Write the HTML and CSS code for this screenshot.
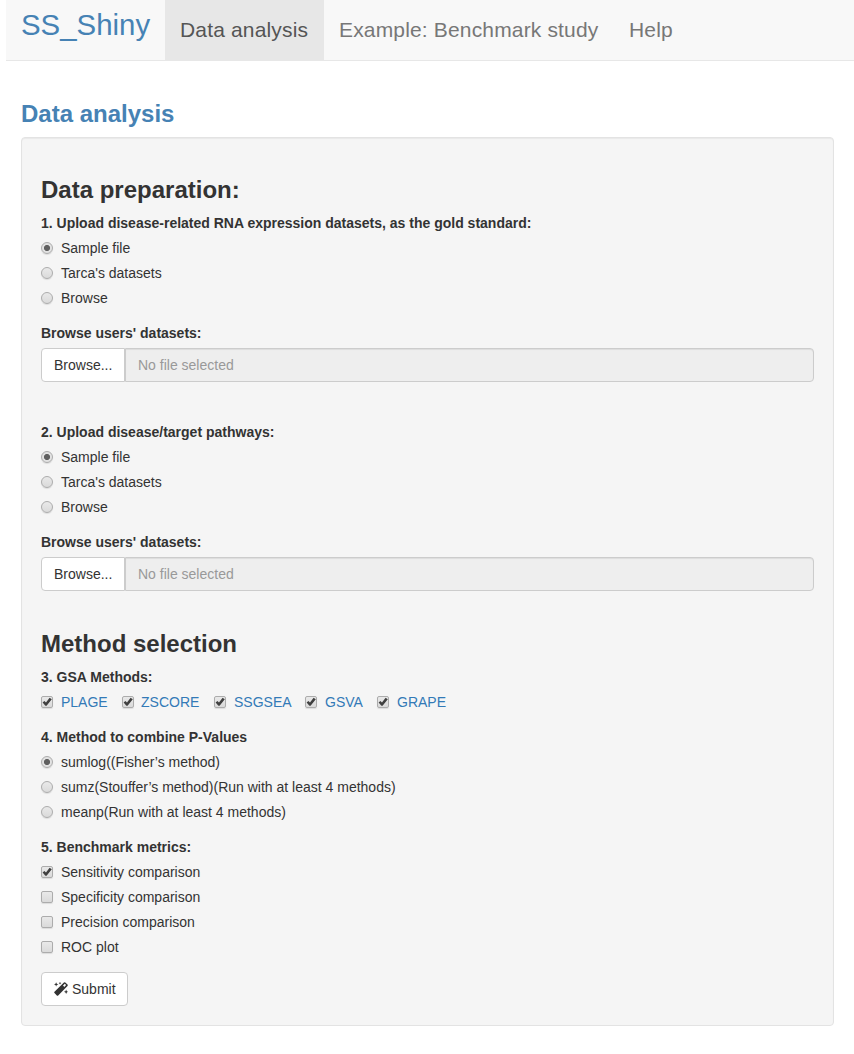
FILE: index.html
```html
<!DOCTYPE html>
<html lang="en">
<head>
<meta charset="utf-8">
<title>SS_Shiny</title>
<link rel="stylesheet" href="styles.css">
</head>
<body>
<nav class="navbar">
  <a class="brand">SS_Shiny</a>
  <a class="tab tab-active">Data analysis</a>
  <a class="tab tab-wide">Example: Benchmark study</a>
  <a class="tab">Help</a>
</nav>
<main class="page">
  <h1 class="title">Data analysis</h1>
  <form class="well">
    <h2 class="section">Data preparation:</h2>
    <div class="group">
      <div class="label">1. Upload disease-related RNA expression datasets, as the gold standard:</div>
      <label class="option"><input class="radio" type="radio" name="data" checked><span>Sample file</span></label>
      <label class="option"><input class="radio" type="radio" name="data"><span>Tarca's datasets</span></label>
      <label class="option"><input class="radio" type="radio" name="data"><span>Browse</span></label>
    </div>
    <div class="group group-file">
      <div class="label">Browse users' datasets:</div>
      <div class="file"><span class="file-button">Browse...</span><span class="file-name">No file selected</span></div>
    </div>
    <div class="group">
      <div class="label">2. Upload disease/target pathways:</div>
      <label class="option"><input class="radio" type="radio" name="path" checked><span>Sample file</span></label>
      <label class="option"><input class="radio" type="radio" name="path"><span>Tarca's datasets</span></label>
      <label class="option"><input class="radio" type="radio" name="path"><span>Browse</span></label>
    </div>
    <div class="group group-file">
      <div class="label">Browse users' datasets:</div>
      <div class="file"><span class="file-button">Browse...</span><span class="file-name">No file selected</span></div>
    </div>
    <h2 class="section section-method">Method selection</h2>
    <div class="group">
      <div class="label">3. GSA Methods:</div>
      <div class="inline">
        <label class="option link w-plage"><input class="check" type="checkbox" checked><span>PLAGE</span></label>
        <label class="option link w-zscore"><input class="check" type="checkbox" checked><span>ZSCORE</span></label>
        <label class="option link w-ssgsea"><input class="check" type="checkbox" checked><span>SSGSEA</span></label>
        <label class="option link w-gsva"><input class="check" type="checkbox" checked><span>GSVA</span></label>
        <label class="option link"><input class="check" type="checkbox" checked><span>GRAPE</span></label>
      </div>
    </div>
    <div class="group">
      <div class="label">4. Method to combine P-Values</div>
      <label class="option"><input class="radio" type="radio" name="combine" checked><span>sumlog((Fisher’s method)</span></label>
      <label class="option"><input class="radio" type="radio" name="combine"><span>sumz(Stouffer’s method)(Run with at least 4 methods)</span></label>
      <label class="option"><input class="radio" type="radio" name="combine"><span>meanp(Run with at least 4 methods)</span></label>
    </div>
    <div class="group">
      <div class="label">5. Benchmark metrics:</div>
      <label class="option"><input class="check" type="checkbox" checked><span>Sensitivity comparison</span></label>
      <label class="option"><input class="check" type="checkbox"><span>Specificity comparison</span></label>
      <label class="option"><input class="check" type="checkbox"><span>Precision comparison</span></label>
      <label class="option"><input class="check" type="checkbox"><span>ROC plot</span></label>
    </div>
    <button class="submit" type="button">
      <svg class="wand" viewBox="0 0 14 14" width="14" height="14" fill="#333">
        <path fill-rule="evenodd" d="M9.9 .5Q10.6 -.1 11.3 .5L13.5 2.6Q14.1 3.3 13.5 4L4.2 13.4Q3.5 14 2.8 13.4L.5 11.1Q-.1 10.4 .5 9.7ZM10.8 1.8L9 3.6L10.3 4.9L12.1 3.1Z"/>
        <path d="M2.1 .2L2.8 1.8L4.4 2.4L2.8 3L2.1 4.6L1.5 3L0 2.4L1.5 1.8ZM6 0L6.5 .8L7.3 1.2L6.5 1.6L6 2.5L5.5 1.6L4.7 1.2L5.5 .8ZM12.1 7.6L12.8 9.2L14 9.8L12.8 10.4L12.1 12L11.5 10.4L9.9 9.8L11.5 9.2Z"/>
      </svg>
      <span>Submit</span>
    </button>
  </form>
</main>
</body>
</html>
```
FILE: styles.css
```css
* { box-sizing: border-box; }
body {
  margin: 0;
  background: #fff;
  color: #333;
  font: 14px/20px "Liberation Sans", Arial, sans-serif;
}
.navbar {
  display: flex;
  height: 61px;
  margin-left: 6px;
  background: #f8f8f8;
  border-bottom: 1px solid #e7e7e7;
}
.brand {
  width: 159px;
  padding: 15px 0 0 15px;
  color: #4682b4;
  font-size: 29.4px;
  line-height: 20px;
}
.tab {
  padding: 20px 15px;
  color: #777;
  font-size: 21px;
  line-height: 20px;
  letter-spacing: .16px;
  white-space: nowrap;
}
.tab-active { width: 159px; background: #e7e7e7; color: #555; }
.tab-wide { width: 290px; }
.page { padding: 40px 20px 0 21px; }
.title {
  margin: 0 0 10px;
  color: #4682b4;
  font-size: 24px;
  line-height: 26px;
}
.well {
  height: 889px;
  padding: 39px 19px 19px;
  background: #f5f5f5;
  border: 1px solid #e3e3e3;
  border-radius: 4px;
  box-shadow: inset 0 1px 1px rgba(0, 0, 0, .05);
}
.section { margin: 0 0 10px; font-size: 24px; line-height: 26px; }
.section-method { margin-top: 40px; }
.group { margin-bottom: 15px; }
.group-file { margin-bottom: 40px; }
.label { margin-bottom: 5px; font-weight: bold; }
.option { display: flex; gap: 8px; align-items: center; height: 20px; }
.option + .option { margin-top: 5px; }
.inline { display: flex; }
.inline .option + .option { margin-top: 0; }
.link { color: #337ab7; }
.w-plage { width: 81px; }
.w-zscore { width: 92px; gap: 7px; }
.w-ssgsea { width: 91px; }
.w-gsva { width: 72px; }
.radio, .check {
  appearance: none;
  flex: none;
  width: 12px;
  height: 12px;
  margin: 0;
  border: 1px solid #acacac;
  background: linear-gradient(#e9e9e9, #dadada);
  box-shadow: 0 1px 1px rgba(0, 0, 0, .1);
}
.radio { border-radius: 50%; }
.radio:checked {
  background: radial-gradient(circle, #606060 0 2.7px, #e2e2e2 3.4px);
}
.check { border-radius: 2px; }
.check:checked::before {
  content: "";
  display: block;
  width: 10px;
  height: 10px;
  background: #404040;
  clip-path: polygon(6% 56%, 24% 40%, 40% 54%, 76% 8%, 98% 22%, 46% 88%, 34% 88%);
}
.file { display: flex; height: 34px; }
.file-button {
  width: 84px;
  padding: 6px 0 6px 12px;
  background: #fff;
  border: 1px solid #ccc;
  border-radius: 4px 0 0 4px;
}
.file-name {
  flex: 1;
  padding: 6px 12px;
  background: #eee;
  border: 1px solid #ccc;
  border-radius: 0 4px 4px 0;
  box-shadow: inset 0 1px 1px rgba(0, 0, 0, .075);
  color: #999;
}
.submit {
  display: flex;
  align-items: center;
  gap: 4px;
  width: 87px;
  height: 34px;
  padding: 0 12px;
  background: #fff;
  border: 1px solid #ccc;
  border-radius: 4px;
  color: #333;
  font: inherit;
}
.wand { flex: none; }
```
